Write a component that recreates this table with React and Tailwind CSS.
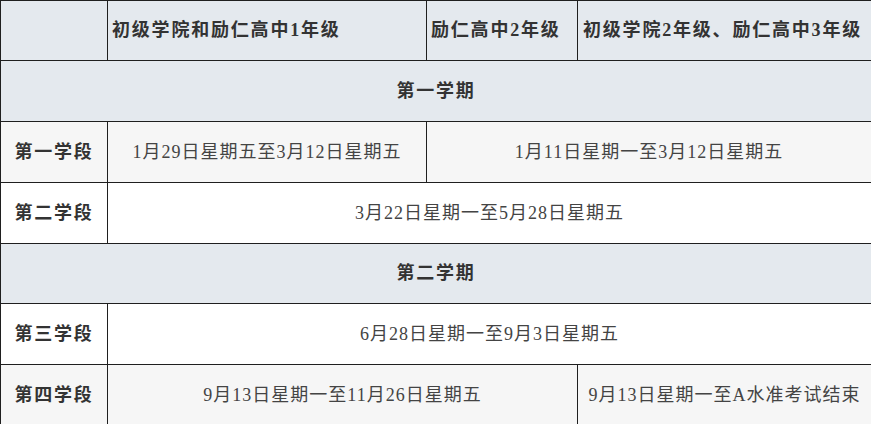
const cell = "border border-[#1f1f1f] text-center align-middle";
const head = "font-bold text-[#333] tracking-[1.8px]";

export default function App() {
  return (
    <div className="w-[871px] h-[424px] overflow-hidden bg-white">
      <table
        className="w-[871px] table-fixed border-collapse text-[18px] tracking-[1px] text-[#444]"
        style={{ fontFamily: '"Liberation Serif", "Noto Sans CJK SC", serif' }}
      >
        <colgroup>
          <col className="w-[107px]" />
          <col className="w-[319px]" />
          <col className="w-[151px]" />
          <col className="w-[294px]" />
        </colgroup>
        <tbody>
          <tr className={`h-[60px] bg-[#e4e9ee] ${head}`}>
            <td className={cell}></td>
            <td className="border border-[#1f1f1f] px-[4px] text-left">初级学院和励仁高中1年级</td>
            <td className="border border-[#1f1f1f] px-[4px] text-left">励仁高中2年级</td>
            <td className="border border-[#1f1f1f] px-[5px] text-left">初级学院2年级、励仁高中3年级</td>
          </tr>
          <tr className={`h-[61px] bg-[#e4e9ee] ${head}`}>
            <td className={cell} colSpan={4}>第一学期</td>
          </tr>
          <tr className="h-[61px] bg-[#f6f6f6]">
            <td className={`${cell} ${head}`}>第一学段</td>
            <td className={cell}>1月29日星期五至3月12日星期五</td>
            <td className={cell} colSpan={2}>1月11日星期一至3月12日星期五</td>
          </tr>
          <tr className="h-[61px] bg-white">
            <td className={`${cell} ${head}`}>第二学段</td>
            <td className={cell} colSpan={3}>3月22日星期一至5月28日星期五</td>
          </tr>
          <tr className={`h-[60px] bg-[#e4e9ee] ${head}`}>
            <td className={cell} colSpan={4}>第二学期</td>
          </tr>
          <tr className="h-[61px] bg-white">
            <td className={`${cell} ${head}`}>第三学段</td>
            <td className={cell} colSpan={3}>6月28日星期一至9月3日星期五</td>
          </tr>
          <tr className="h-[61px] bg-[#f6f6f6]">
            <td className={`${cell} ${head}`}>第四学段</td>
            <td className={cell} colSpan={2}>9月13日星期一至11月26日星期五</td>
            <td className={cell}>9月13日星期一至A水准考试结束</td>
          </tr>
        </tbody>
      </table>
    </div>
  );
}
